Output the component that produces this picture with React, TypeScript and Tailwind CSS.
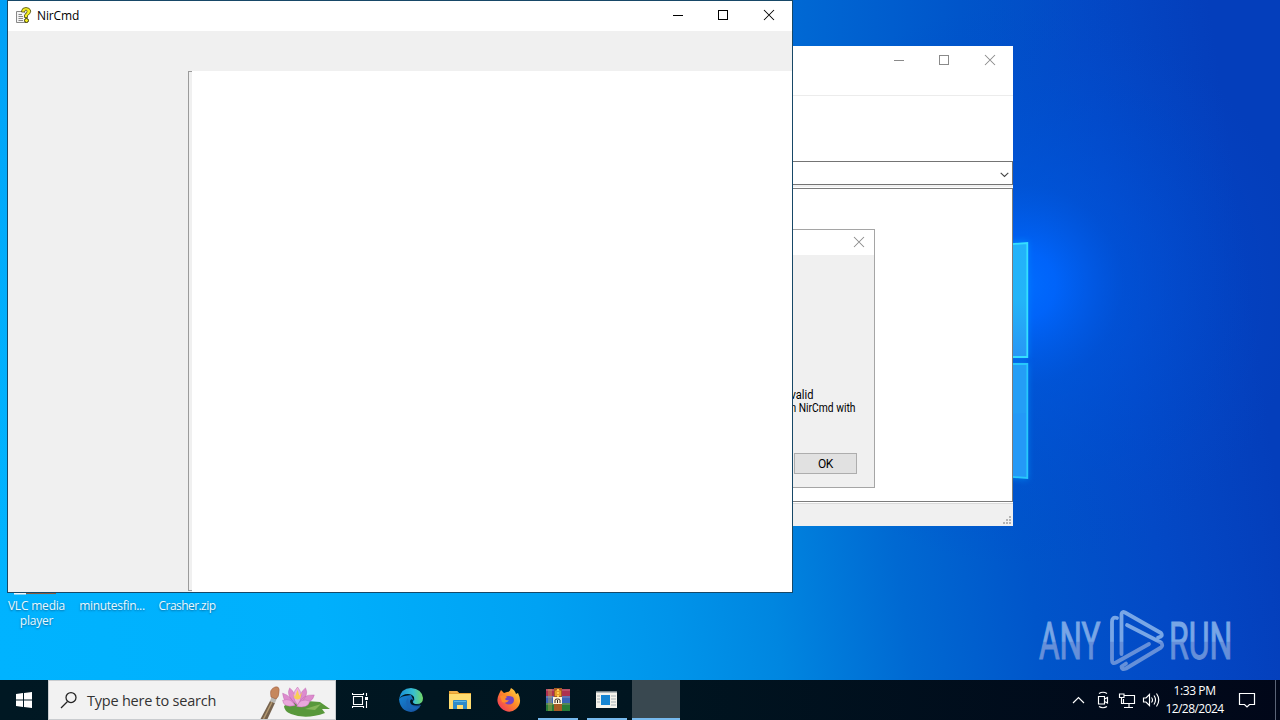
import React from "react";

const ui = "font-['Open_Sans','Noto_Sans',sans-serif]";

function Wallpaper() {
  return (
    <svg className="absolute inset-0" width="1280" height="680" viewBox="0 0 1280 680" aria-hidden="true">
      <defs>
        <linearGradient id="base" gradientUnits="userSpaceOnUse" x1="0" y1="680" x2="1280" y2="500">
          <stop offset="0" stopColor="#00b3ff" />
          <stop offset="0.25" stopColor="#00b0fc" />
          <stop offset="0.42" stopColor="#00a2f3" />
          <stop offset="0.52" stopColor="#0094ea" />
          <stop offset="0.6" stopColor="#0086e0" />
          <stop offset="0.7" stopColor="#0069d2" />
          <stop offset="0.8" stopColor="#0055ca" />
          <stop offset="0.9" stopColor="#0349c6" />
          <stop offset="1" stopColor="#043ebb" />
        </linearGradient>
        <linearGradient id="leftShade" x1="0" y1="0" x2="0" y2="1">
          <stop offset="0" stopColor="#009ff6" />
          <stop offset="1" stopColor="#00b3ff" stopOpacity="0" />
        </linearGradient>
        <radialGradient id="glow" gradientUnits="userSpaceOnUse" cx="1022" cy="285" r="280">
          <stop offset="0" stopColor="#006cff" />
          <stop offset="0.12" stopColor="#0066ff" stopOpacity="0.9" />
          <stop offset="0.36" stopColor="#0056e0" stopOpacity="0.55" />
          <stop offset="1" stopColor="#0048cc" stopOpacity="0" />
        </radialGradient>
        <linearGradient id="topShade" gradientUnits="userSpaceOnUse" x1="790" y1="0" x2="1130" y2="0">
          <stop offset="0" stopColor="#0069d4" />
          <stop offset="0.5" stopColor="#0055ca" />
          <stop offset="1" stopColor="#0346c4" stopOpacity="0" />
        </linearGradient>
        <linearGradient id="pane" x1="0" y1="0" x2="0" y2="1">
          <stop offset="0" stopColor="#23b2fa" />
          <stop offset="0.5" stopColor="#23b4f8" />
          <stop offset="1" stopColor="#2896f5" />
        </linearGradient>
        <filter id="soft" x="-100%" y="-20%" width="300%" height="140%">
          <feGaussianBlur stdDeviation="3" />
        </filter>
      </defs>
      <rect width="1280" height="680" fill="url(#base)" />
      <rect width="12" height="600" fill="url(#leftShade)" />
      <rect x="790" width="340" height="50" fill="url(#topShade)" />
      <circle cx="1022" cy="285" r="280" fill="url(#glow)" />
      <path d="M1000 243L1028 241V358H1000ZM1000 363H1028V480L1000 477Z" fill="#0798ff" opacity="0.6" filter="url(#soft)" />
      <path d="M1000 245L1027.300 243V357H1000Z" fill="url(#pane)" stroke="#35dfff" strokeWidth="1.800" />
      <path d="M1000 364H1027.300V478L1000 476Z" fill="#2499f7" stroke="#27c8fc" strokeWidth="1.800" />
      <path d="M1000 365H1026V413L1000 415Z" fill="#249ef6" />
    </svg>
  );
}

function Watermark() {
  return (
    <svg className="absolute left-[1020px] top-[596px]" width="250" height="84" viewBox="1020 596 250 84">
      <defs>
        <linearGradient id="mark" gradientUnits="userSpaceOnUse" x1="0" y1="610" x2="0" y2="670">
          <stop offset="0" stopColor="#78a6e6" />
          <stop offset="0.52" stopColor="#78a6e6" />
          <stop offset="0.54" stopColor="#668fd9" />
          <stop offset="1" stopColor="#6490d9" />
        </linearGradient>
      </defs>
      <g fill="url(#mark)" stroke="url(#mark)" strokeWidth="1.100" fontFamily="Roboto, sans-serif" fontSize="51.500">
        <text x="1039" y="659" textLength="61.500" lengthAdjust="spacingAndGlyphs">ANY</text>
        <text x="1169" y="659" textLength="63.500" lengthAdjust="spacingAndGlyphs">RUN</text>
      </g>
      <g fill="none" stroke="url(#mark)" strokeWidth="3.800" strokeLinecap="round" strokeLinejoin="round">
        <path d="M1117 618Q1112 616.500 1112 622V660Q1112 664.500 1116 662.500L1149 644" />
        <path d="M1121.500 654V614Q1122 611 1125 612.500L1161 633Q1163.500 636.500 1158 637.500" />
        <path d="M1127 625L1161 642.500Q1163.500 645.500 1161 647.500L1126 668.500Q1121.500 670.500 1121.500 666.500L1126 663.500" />
      </g>
    </svg>
  );
}

function Controls({ color }: { color: string }) {
  return (
    <svg width="138" height="30" viewBox="0 0 138 30" fill="none" stroke={color} shapeRendering="crispEdges">
      <path d="M19 15.500H29M64.500 10.500H73.500V19.500H64.500Z" />
      <path d="M110 10L120 20M120 10L110 20" shapeRendering="auto" strokeWidth="1.050" />
    </svg>
  );
}

function HelpFileIcon() {
  return (
    <svg width="16" height="17" viewBox="0 0 16 17">
      <path d="M.5 4.500H8L10 7V15.500H.5Z" fill="#f4f4f4" stroke="#888" />
      <path d="M2.500 7.500H6M2.500 9.500H7M2.500 11.500H7M2.500 13.500H7" stroke="#888" />
      <path d="M5.500 4Q6 .5 10 .5T14.800 4Q14.500 7 11.500 8.500V10.500H8.500V8Q11 6 11 4.500Q11 3 10 3T8.500 5H5.500Z" fill="#f4ee20" stroke="#48450b" strokeWidth=".8" />
      <circle cx="10.500" cy="13.500" r="2" fill="#f4ee20" stroke="#3b390a" />
    </svg>
  );
}

function ListerWindow() {
  return (
    <section className="absolute left-[600px] top-[46px] flex h-[480px] w-[413px] flex-col bg-white">
      <header className="flex h-[50px] items-start justify-end border-b border-[#ececec]">
        <div className="-mt-px"><Controls color="#8a8a8a" /></div>
      </header>
      <div className="h-[65px]" />
      <div className="flex h-6 items-center justify-end border border-[#747474] pr-[3px] pt-[3px]">
        <svg width="9" height="6" viewBox="0 0 9 6" fill="none" stroke="#444" strokeWidth="1.100"><path d="M.7 .8L4.500 4.500L8.300 .8" /></svg>
      </div>
      <div className="h-[3px] border-b border-white bg-[#f0f0f0]" />
      <div className="h-[314px] border border-[#7c7c7c]" />
      <footer className="mt-px flex flex-1 items-end justify-end border-t border-[#dadada] bg-[#f0f0f0] pb-px pr-px">
        <svg width="9" height="9" viewBox="0 0 9 9" fill="#b4b4b4"><path d="M6 0h2v2H6zM3 3h2v2H3zM6 3h2v2H6zM0 6h2v2H0zM3 6h2v2H3zM6 6h2v2H6z" /></svg>
      </footer>
    </section>
  );
}

function MessageDialog() {
  return (
    <section className="absolute left-[770px] top-[229px] flex h-[259px] w-[105px] flex-col border border-[#a5a5a5] bg-[#f0f0f0]">
      <header className="flex h-[25px] items-start justify-end bg-white pr-[9px] pt-1.5">
        <svg width="12" height="12" viewBox="0 0 12 12" stroke="#8a8a8a" strokeWidth="1.050"><path d="M1 1L11 11M11 1L1 11" /></svg>
      </header>
      <div className="flex h-[159px] flex-col justify-end pl-[19px] text-black">
        <svg width="84" height="30" fontFamily="Roboto, sans-serif" fontSize="12">
          <text x="0.500" y="15" textLength="23" lengthAdjust="spacingAndGlyphs">valid</text>
          <text x="0.500" y="28" textLength="65" lengthAdjust="spacingAndGlyphs">n NirCmd with</text>
        </svg>
      </div>
      <div className="mt-[39px] flex justify-end pr-[17px]">
        <button className="flex h-[21px] w-[63px] items-center justify-center border border-[#adadad] bg-[#e1e1e1] font-['Roboto',sans-serif] text-[12px] leading-none tracking-[-0.300px] text-black">OK</button>
      </div>
    </section>
  );
}

function NirCmdWindow() {
  return (
    <section className="absolute left-[7px] top-0 flex h-[593px] w-[786px] flex-col border border-[#174867] bg-[#f0f0f0]">
      <header className="flex h-[30px] shrink-0 items-start justify-between bg-white">
        <div className="flex items-start gap-[5px] pl-2 pt-1.5">
          <HelpFileIcon />
          <span className={`${ui} mt-px text-[12px] leading-4 tracking-[-0.150px] text-black`}>NirCmd</span>
        </div>
        <div className="-mt-px"><Controls color="#000" /></div>
      </header>
      <div className="h-10 shrink-0" />
      <div className="flex flex-1 pl-[180px]">
        <div className="mb-px w-1 border-y border-l border-[#9b9b9b]" />
        <div className="flex-1 bg-white" />
      </div>
    </section>
  );
}

function DesktopLabels() {
  const label = `${ui} block text-[12px] leading-[15px] text-[#e9f9ff] text-center [text-shadow:0_1px_2px_#0a6ba0]`;
  return (
    <div className="absolute left-0 top-[591px] flex">
      <div className="w-[73px]">
        <svg className="ml-3" width="50" height="7" viewBox="0 0 50 7"><path d="M2 3.500H14V0H2Z" fill="#f6f6f6" /><path d="M14 2.300H44" stroke="#8a5a3c" strokeWidth="1.500" /></svg>
        <span className={`${label} tracking-[-0.200px]`}>VLC media<br />player</span>
      </div>
      <div className="w-[78px] pt-[7px]"><span className={`${label} tracking-[-0.300px]`}>minutesfin...</span></div>
      <div className="w-[72px] pt-[7px]"><span className={`${label} tracking-[-0.550px]`}>Crasher.zip</span></div>
    </div>
  );
}

function SearchArt() {
  return (
    <svg width="76" height="38" viewBox="0 0 76 38">
      <path d="M1 39L11 20L16 22L8 39Z" fill="#75624d" />
      <path d="M4 39L13 21" stroke="#b39970" strokeWidth="1.500" />
      <path d="M11 20L13 15L18 17L16 22Z" fill="#b8b8b4" />
      <path d="M12 16Q10 8 16 6Q21 5 20 11Q20 16 17 18Z" fill="#c6875d" stroke="#935338" strokeWidth=".5" />
      <path d="M25 25Q33 19 48 20L61 21L71 28L63 28L66 32Q47 39 32 33Q25 30 25 25Z" fill="#58983b" />
      <path d="M46 28L62 23L56 29Z" fill="#85b65a" />
      <g fill="#dd8bce" stroke="#bc65ae" strokeWidth=".5" transform="translate(2.500 -1) scale(.88)">
        <path d="M38 29Q25 28 24 15Q34 18 38 29ZM40 28Q27 18 32 9Q39 14 40 28ZM42 28Q58 27 60 17Q46 16 42 28ZM42 28Q55 18 50 9Q42 15 42 28Z" />
        <path d="M41 29Q32 17 41 8Q49 17 41 29Z" fill="#efb2e0" />
        <path d="M38 29Q25 32 24 23Q34 20 38 29ZM40 30Q53 33 55 24Q44 20 40 30Z" fill="#eaa7dc" />
        <path d="M36 15L38 19L41 11L43 18L46 14L44 21Q40 24 37 20Z" fill="#f9cf53" stroke="none" />
      </g>
    </svg>
  );
}

function EdgeIcon() {
  return (
    <svg width="24" height="24" viewBox="0 0 24 24">
      <defs>
        <linearGradient id="edgeTop" x1="0" x2="1"><stop stopColor="#168ed8" /><stop offset=".6" stopColor="#38bfd0" /><stop offset="1" stopColor="#72d765" /></linearGradient>
        <linearGradient id="edgeBottom" x1="0" x2="1" y2="1"><stop stopColor="#1485d5" /><stop offset="1" stopColor="#184e9c" /></linearGradient>
      </defs>
      <path d="M0 11Q1 8 12 7L16 15L22 17Q18 24 12 24Q1 23 0 11Z" fill="url(#edgeBottom)" />
      <path d="M0 11Q2 0 12 0Q23 1 24 10Q24 16 18 16Q14 16 14 14Q16 12 15 9Q13 6 9 6Q3 6 0 11Z" fill="url(#edgeTop)" />
      <path d="M9 10Q5 15 10 20Q15 24 21 19Q14 20 11 16Q9 13 9 10Z" fill="#1866b6" />
      <path d="M14 12Q12 10 11 13Q11 19 22 17Q19 16 16 16Q13 15 14 12Z" fill="#001520" />
    </svg>
  );
}

function ExplorerIcon() {
  return (
    <svg width="24" height="22" viewBox="0 0 24 22">
      <path d="M1 2H9L11 4H23V19H1Z" fill="#e7a22f" />
      <path d="M1 5H23V20H1Z" fill="#ffdc70" />
      <path d="M1 2H9L11 4H3Z" fill="#f2b14a" />
      <path d="M5 20V12Q5 11 6 11H18Q19 11 19 12V20H15V16H9V20H5Z" fill="#2e8bc9" />
      <path d="M6 12H18V13H6Z" fill="#57b5e7" />
    </svg>
  );
}

function FirefoxIcon() {
  return (
    <svg width="24" height="24" viewBox="0 0 24 24">
      <defs><linearGradient id="fox" x1="1" x2="0" y2="1"><stop stopColor="#ffe34b" /><stop offset=".45" stopColor="#ff8c26" /><stop offset="1" stopColor="#ed2568" /></linearGradient></defs>
      <path d="M2 6L4 2L7 5L10 4Q13 4 14 0Q18 2 19 6L21 5Q26 15 19 21Q12 27 4 20Q-2 14 2 6Z" fill="url(#fox)" />
      <path d="M8 9Q11 7 16 9Q18 12 16 15Q12 18 8 15Q6 12 8 9Z" fill="#7444c2" />
      <path d="M3 8Q7 6 10 9L8 11Q9 13 12 12Q10 16 5 14Z" fill="#ff8b2a" />
    </svg>
  );
}

function WinRarIcon() {
  return (
    <svg width="24" height="23" viewBox="0 0 24 23">
      <path d="M0 1H24V8H0Z" fill="#ad3151" /><path d="M0 8H24V15H0Z" fill="#3a64b7" /><path d="M0 15H24V23H0Z" fill="#287c39" />
      <path d="M0 2H24M0 9H24M0 16H24" stroke="#d9a7ad" strokeWidth=".8" opacity=".65" />
      <path d="M3 1V23M5 1V23" stroke="#d1b758" strokeWidth=".7" />
      <path d="M8 0H16V23H8Z" fill="#a75b25" /><path d="M9 3Q12 0 15 3V8H9Z" fill="#e59b27" />
      <path d="M7 9H16V16H7Z" fill="#fff3d8" /><path d="M9 15V12Q9 11 11.500 11T14 12V15M11.500 12V15" stroke="#33251b" fill="none" />
      <path d="M12 1V10" stroke="#ffcb48" strokeWidth="2" strokeDasharray="2 1" />
    </svg>
  );
}

function AppWindowIcon() {
  return (
    <svg width="21" height="17" viewBox="0 0 21 17">
      <path fill="#f5f3ec" d="M0 1H21V17H0Z" /><path stroke="#9fa9ac" strokeWidth="1.500" d="M0 1H21" />
      <path fill="#1785d2" d="M5 4H14V14H5Z" />
      <path d="M1 5H4M1 8H4M1 11H4M15 5H20M15 8H20M15 11H20M15 14H20" stroke="#a7b2b5" />
    </svg>
  );
}

function TaskButton({ children, running = false, active = false }: { children?: React.ReactNode; running?: boolean; active?: boolean }) {
  return (
    <div className={`flex h-10 shrink-0 flex-col items-center ${active ? "ml-px w-12 bg-[#394850]" : "w-[49px]"}`}>
      <div className="flex h-[38px] flex-1 items-center">{children}</div>
      {running && <div className={`h-0.5 bg-[#76b9ed] ${active ? "w-12" : "w-10"}`} />}
    </div>
  );
}

function Taskbar() {
  return (
    <footer className="absolute bottom-0 left-0 flex h-10 w-[1280px] bg-linear-to-r from-[#001823] via-[#001520] to-[#010719]">
      <div className="flex w-12 items-center justify-center">
        <svg width="16" height="16" viewBox="0 0 16 16" fill="#fff"><path d="M0 2L7 1V7.500H0ZM8 1L16 0V7.500H8ZM0 8.500H7V15L0 14ZM8 8.500H16V16L8 15Z" /></svg>
      </div>
      <div className="flex w-72 items-center border border-[#c9cccf] bg-[#f2f2f2] pl-[11px]">
        <svg width="18" height="18" viewBox="0 0 18 18" fill="none" stroke="#222" strokeWidth="1.250"><circle cx="11" cy="6.500" r="5" /><path d="M7.500 10.500L1 17" /></svg>
        <span className={`${ui} ml-[9px] mt-0.5 whitespace-nowrap text-[14.500px] tracking-[-0.230px] text-[#333]`}>Type here to search</span>
        <div className="ml-auto h-[38px]"><SearchArt /></div>
      </div>
      <div className="flex w-12 items-center justify-center">
        <svg width="17" height="17" viewBox="0 0 17 17" fill="none" stroke="#fff" strokeWidth="1.100"><path d="M1.500 4.500H10.500V12.500H1.500ZM.5 1V2.500H11.500V1M.5 16V14.500H11.500V16M14.500 1V4M14.500 9V16" /><path fill="#fff" stroke="none" d="M13 5H16V8H13Z" /></svg>
      </div>
      <div className="flex pl-0.5">
        <TaskButton><EdgeIcon /></TaskButton>
        <TaskButton><ExplorerIcon /></TaskButton>
        <TaskButton><FirefoxIcon /></TaskButton>
        <TaskButton running><WinRarIcon /></TaskButton>
        <TaskButton running><AppWindowIcon /></TaskButton>
        <TaskButton running active />
      </div>
      <div className="ml-auto flex items-center text-white">
        <svg width="88" height="20" viewBox="0 0 88 20" fill="none" stroke="#fff" strokeWidth="1.150">
          <path d="M1 13L6.500 7.500L12 13" />
          <path d="M26.500 6.500H32.500V14H26.500ZM32.500 9L35.500 7.500V13L32.500 11.500M27 3.500Q31 1 35 3.500M27 16.500Q31 19 35 16.500" />
          <path d="M52 5.500H62.500V13.500H51.500V9M57 13.500V17M52 17.500H61M47.500 4V7.500H52V4ZM49.500 7.500V13.500H52" />
          <path d="M71.500 8H74L77.500 4.500V15.500L74 12H71.500ZM79.500 7.500Q81.500 10 79.500 12.500M82 5.500Q85 10 82 14.500M84.500 3.500Q89 10 84.500 16.500" />
        </svg>
        <div className={`${ui} ml-0.5 flex w-[65px] flex-col items-center whitespace-nowrap text-[12px] leading-[18px]`}>
          <span className="tracking-[-0.400px]">1:33 PM</span><span className="tracking-[-0.550px]">12/28/2024</span>
        </div>
        <svg className="ml-[11px]" width="18" height="18" viewBox="0 0 18 18" fill="none" stroke="#fff" strokeWidth="1.200"><path d="M1.500 2.500H16.500V13.500H11.500L9 16L6.500 13.500H1.500Z" /></svg>
        <div className="ml-[19px] mr-1 h-10 w-px bg-[#5b6477]" />
      </div>
    </footer>
  );
}

export default function App() {
  return (
    <main className="relative h-[720px] w-[1280px] overflow-hidden bg-[#00aaf5]">
      <Wallpaper />
      <Watermark />
      <DesktopLabels />
      <ListerWindow />
      <MessageDialog />
      <NirCmdWindow />
      <Taskbar />
    </main>
  );
}
